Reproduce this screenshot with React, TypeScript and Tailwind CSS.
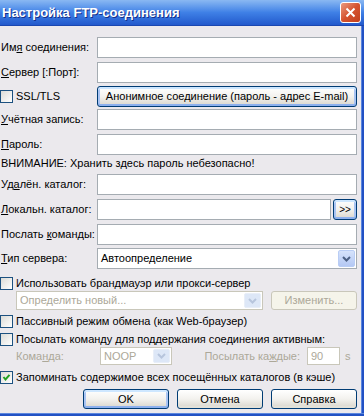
import type { ReactNode } from 'react';

const txt = "font-['Liberation_Sans',sans-serif] text-[11px] leading-none text-black whitespace-nowrap";

function Field({ className = '', children }: { className?: string; children?: ReactNode }) {
  return (
    <div className={`h-full border border-[#a5acb2] bg-white flex items-center pl-[3px] ${className}`}>
      {children}
    </div>
  );
}

function XPButton({ children, focused = false, disabled = false, className = '' }: { children: ReactNode; focused?: boolean; disabled?: boolean; className?: string }) {
  const border = disabled ? 'border-[#c9c7ba]' : 'border-[#003c74]';
  const bg = disabled
    ? 'bg-[#f5f4ea]'
    : 'bg-gradient-to-b from-white via-[#f3f2ee] to-[#d8d5cc]';
  const ring = focused ? 'shadow-[inset_0_-2px_0_#8cb0ee,inset_0_2px_0_#cee7ff,inset_2px_0_0_#a9c4f3,inset_-2px_0_0_#a9c4f3]' : 'shadow-[inset_0_-2px_0_#e3e1d8]';
  return (
    <div className={`h-full rounded-[3px] border ${border} ${bg} ${disabled ? '' : ring} flex items-center justify-center ${disabled ? 'text-[#aca899]' : ''} ${className}`}>
      {children}
    </div>
  );
}

function Check({ checked = false }: { checked?: boolean }) {
  return (
    <div className="w-[13px] h-[13px] border border-[#1c5180] bg-gradient-to-br from-[#dcdcd7] to-white flex items-center justify-center shrink-0">
      {checked && (
        <svg width="9" height="9" viewBox="0 0 9 9">
          <path d="M1.5 4 L3.5 6.5 L7.5 1.8" stroke="#21a121" strokeWidth="2" fill="none" />
        </svg>
      )}
    </div>
  );
}

function ComboArrow({ disabled = false }: { disabled?: boolean }) {
  return (
    <div className={`w-[17px] h-full rounded-[2px] border ${disabled ? 'border-[#e8eef8] bg-[#dde7f7]' : 'border-[#b9cdf5] bg-gradient-to-b from-[#d6e3fb] to-[#b4c8f4]'} flex items-center justify-center shrink-0`}>
      <svg width="9" height="6" viewBox="0 0 9 6">
        <path d="M1 1 L4.5 4.5 L8 1" stroke={disabled ? '#b7c5dd' : '#4d6185'} strokeWidth="2" fill="none" />
      </svg>
    </div>
  );
}

function LabelRow({ label, children }: { label: ReactNode; children: ReactNode }) {
  return (
    <div className="flex h-[21px] items-center">
      <div className="w-[97px] pl-px">{label}</div>
      <div className="flex-1 h-full flex">{children}</div>
    </div>
  );
}

function CheckRow({ checked = false, children, className = '' }: { checked?: boolean; children: ReactNode; className?: string }) {
  return (
    <div className={`flex items-center gap-[3px] ${className}`}>
      <Check checked={checked} />
      <span>{children}</span>
    </div>
  );
}

export default function App() {
  return (
    <div className={`w-[364px] h-[416px] flex flex-col bg-[#ebe9ed] overflow-hidden ${txt}`}>
      {/* Title bar */}
      <div className="h-[26px] shrink-0 flex items-center justify-between pl-[2px] pr-[3px] bg-gradient-to-b from-[#8ab8f2] via-[#3f80e6] to-[#2359cc] border-b border-[#1b47b0]">
        <span className="font-['Liberation_Sans',sans-serif] font-bold text-[13px] text-white [text-shadow:1px_1px_0_#14308a]">
          Настройка FTP-соединения
        </span>
        <div className="w-[21px] h-[21px] rounded-[3px] border border-white bg-gradient-to-br from-[#e8987e] via-[#d5532f] to-[#c23e1c] flex items-center justify-center">
          <svg width="11" height="11" viewBox="0 0 11 11">
            <path d="M1.5 1.5 L9.5 9.5 M9.5 1.5 L1.5 9.5" stroke="white" strokeWidth="2" />
          </svg>
        </div>
      </div>

      <div className="flex-1 flex">
        {/* Content */}
        <div className="flex-1 flex flex-col pt-[11px] pr-[4px]">
          <LabelRow label={<span>Им<u>я</u> соединения:</span>}>
            <Field className="flex-1" />
          </LabelRow>
          <div className="mt-[4px]">
            <LabelRow label={<span><u>С</u>ервер [:Порт]:</span>}>
              <Field className="flex-1" />
            </LabelRow>
          </div>
          <div className="mt-[3px] flex h-[21px] items-center">
            <div className="w-[97px]">
              <CheckRow>SSL/TLS</CheckRow>
            </div>
            <XPButton focused className="flex-1">Анонимное соединение (пароль - адрес E-mail)</XPButton>
          </div>
          <div className="mt-[2px]">
            <LabelRow label={<span><u>У</u>чётная запись:</span>}>
              <Field className="flex-1" />
            </LabelRow>
          </div>
          <div className="mt-[4px]">
            <LabelRow label={<span><u>П</u>ароль:</span>}>
              <Field className="flex-1" />
            </LabelRow>
          </div>
          <div className="h-[17px] flex items-center pl-px">ВНИМАНИЕ: Хранить здесь пароль небезопасно!</div>
          <div className="mt-[2px]">
            <LabelRow label={<span>Уд<u>а</u>лён. каталог:</span>}>
              <Field className="flex-1" />
            </LabelRow>
          </div>
          <div className="mt-[4px]">
            <LabelRow label={<span><u>Л</u>окальн. каталог:</span>}>
              <Field className="flex-1" />
              <XPButton focused className="w-[24px] ml-[2px] text-[10px]">&gt;&gt;</XPButton>
            </LabelRow>
          </div>
          <div className="mt-[4px]">
            <LabelRow label={<span>Послать <u>к</u>оманды:</span>}>
              <Field className="flex-1" />
            </LabelRow>
          </div>
          <div className="mt-[3px]">
            <LabelRow label={<span><u>Т</u>ип сервера:</span>}>
              <div className="flex-1 h-full border border-[#a5acb2] bg-white flex items-center pl-[3px] pr-px py-px">
                <span className="flex-1">Автоопределение</span>
                <ComboArrow />
              </div>
            </LabelRow>
          </div>

          <CheckRow className="mt-[6px] h-[16px]">Использовать брандмауэр или прокси-сервер</CheckRow>
          <div className="h-[19px] flex pl-[16px]">
            <div className="w-[247px] h-full border border-[#c9c7ba] bg-white flex items-center pl-[3px] pr-px py-px text-[#aca899]">
              <span className="flex-1">Определить новый...</span>
              <ComboArrow disabled />
            </div>
            <XPButton disabled className="ml-[8px] flex-1">Изменить...</XPButton>
          </div>
          <CheckRow className="mt-[3px] h-[16px]">Пассивный режим обмена (как Web-браузер)</CheckRow>
          <CheckRow className="mt-[3px] h-[15px]">Посылать команду для поддержания соединения активным:</CheckRow>
          <div className="h-[18px] flex items-center text-[#aca899]">
            <div className="w-[100px] pl-[16px]">Кома<u>н</u>да:</div>
            <div className="w-[72px] h-full border border-[#c9c7ba] bg-white flex items-center pl-[3px] pr-px py-px">
              <span className="flex-1">NOOP</span>
              <ComboArrow disabled />
            </div>
            <div className="flex-1 text-right pr-[7px]">Посылать ка<u>ж</u>дые:</div>
            <div className="w-[33px] h-full border border-[#c9c7ba] bg-white flex items-center pl-[3px]">90</div>
            <div className="pl-[5px] w-[17px]">s</div>
          </div>
          <CheckRow checked className="mt-[4px] h-[16px]">Запоминать содержимое всех посещённых каталогов (в кэше)</CheckRow>
          <div className="mt-[4px] h-[20px] flex justify-end gap-[8px]">
            <XPButton focused className="w-[86px]">OK</XPButton>
            <XPButton className="w-[86px]">Отмена</XPButton>
            <XPButton className="w-[86px]">Справка</XPButton>
          </div>
        </div>
        {/* Right border */}
        <div className="w-[3px] bg-[#2151c4] border-l border-[#5b86de]" />
      </div>
      <div className="h-[3px] shrink-0 bg-[#2151c4] border-t border-[#5b86de]" />
    </div>
  );
}
